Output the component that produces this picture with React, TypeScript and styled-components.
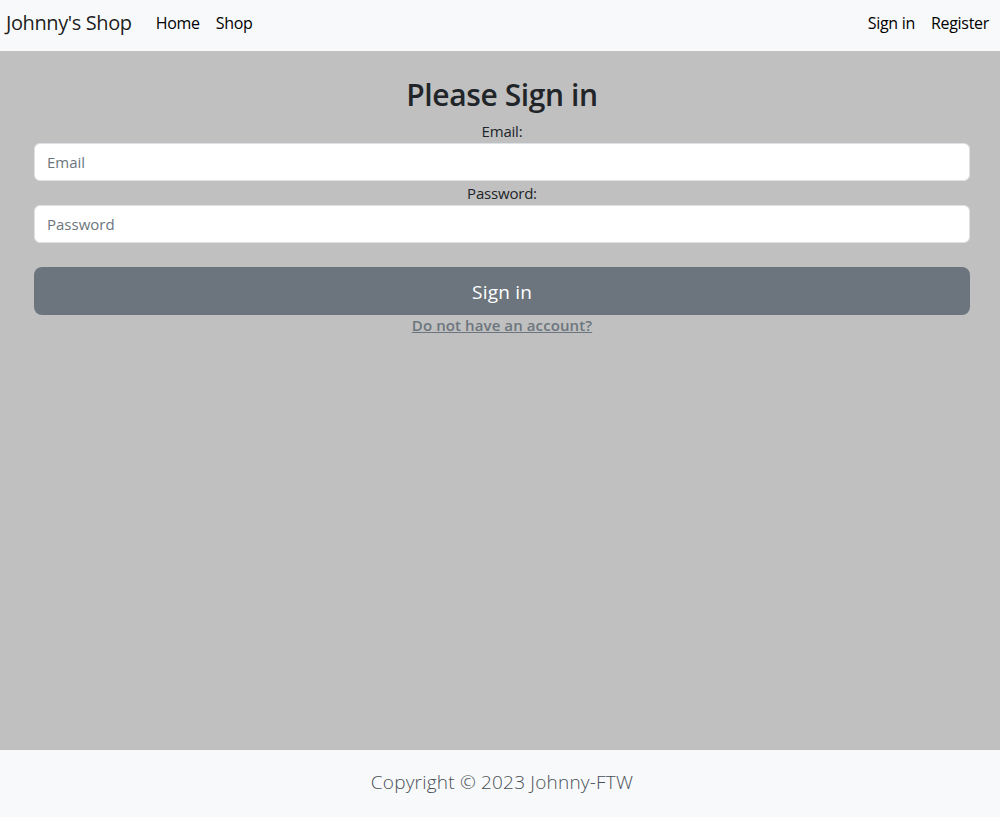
import React from "react";
import styled, { createGlobalStyle } from "styled-components";

const Global = createGlobalStyle`
  *, *::before, *::after { box-sizing: border-box; }
  body {
    margin: 0;
    font-family: "Open Sans", "Noto Sans", sans-serif;
    font-size: 16px;
    line-height: 1.5;
    color: #212529;
    background: #fff;
  }
`;

const Page = styled.div`
  min-height: 817px;
  display: flex;
  flex-direction: column;
`;

const NavBar = styled.nav`
  height: 51px;
  background: #f8f9fa;
  display: flex;
  align-items: center;
  padding: 0 11px 5px 6px;
`;

const Brand = styled.a`
  font-size: 20px;
  color: rgba(0, 0, 0, 0.9);
  text-decoration: none;
  margin-right: 16px;
  letter-spacing: -0.4px;
`;

const NavGroup = styled.div<{ $end?: boolean }>`
  display: flex;
  gap: 16px;
  margin-left: ${(p) => (p.$end ? "auto" : "8px")};
`;

const NavLink = styled.a`
  font-size: 16px;
  color: #000;
  text-decoration: none;
  letter-spacing: -0.3px;
`;

const Main = styled.main`
  flex: 1;
  background: #c0c0c0;
  padding: 26px 30px 0 34px;
  display: flex;
  flex-direction: column;
  align-items: stretch;
`;

const Title = styled.h2`
  margin: 0 0 6px;
  text-align: center;
  font-size: 30px;
  font-weight: 600;
  line-height: 36px;
  letter-spacing: -0.4px;
`;

const Label = styled.label`
  display: block;
  text-align: center;
  font-size: 15px;
  line-height: 24px;
  letter-spacing: -0.2px;
`;

const Input = styled.input`
  display: block;
  width: 100%;
  height: 38px;
  padding: 6px 12px;
  font-family: inherit;
  font-size: 15px;
  color: #212529;
  background: #fff;
  border: 1px solid #dee2e6;
  border-radius: 6px;
  outline: none;
  &::placeholder { color: #6c757d; }
`;

const Button = styled.button`
  margin-top: 24px;
  height: 48px;
  width: 100%;
  background: #6c757d;
  color: #fff;
  border: none;
  border-radius: 8px;
  font-family: inherit;
  font-size: 19px;
  letter-spacing: 0.2px;
  padding-top: 2px;
`;

const SmallLink = styled.a`
  align-self: center;
  font-size: 15px;
  line-height: 20px;
  font-weight: 600;
  color: #6c757d;
  text-decoration: underline;
  letter-spacing: 0.1px;
`;

const Footer = styled.footer`
  height: 67px;
  background: #f8f9fa;
  display: flex;
  align-items: center;
  justify-content: center;
  font-size: 19px;
  font-weight: 300;
  color: #495057;
  padding: 0 0 2px 4px;
  letter-spacing: 0.2px;
`;

export default function App() {
  return (
    <Page>
      <Global />
      <NavBar>
        <Brand href="#">Johnny's Shop</Brand>
        <NavGroup>
          <NavLink href="#">Home</NavLink>
          <NavLink href="#">Shop</NavLink>
        </NavGroup>
        <NavGroup $end>
          <NavLink href="#">Sign in</NavLink>
          <NavLink href="#">Register</NavLink>
        </NavGroup>
      </NavBar>
      <Main>
        <Title>Please Sign in</Title>
        <Label htmlFor="email">Email:</Label>
        <Input id="email" placeholder="Email" />
        <Label htmlFor="password">Password:</Label>
        <Input id="password" type="password" placeholder="Password" />
        <Button>Sign in</Button>
        <SmallLink href="#">Do not have an account?</SmallLink>
      </Main>
      <Footer>Copyright © 2023 Johnny-FTW</Footer>
    </Page>
  );
}
